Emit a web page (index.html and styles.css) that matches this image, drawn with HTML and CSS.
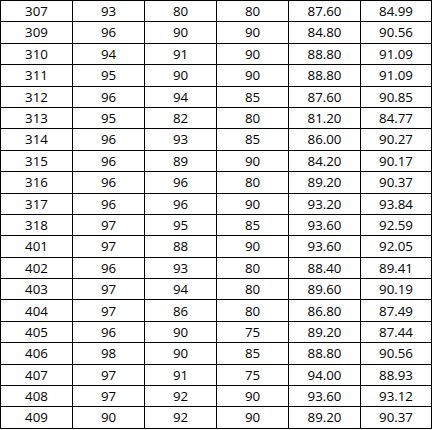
FILE: index.html
```html
<!DOCTYPE html>
<html>
<head>
<meta charset="utf-8">
<link rel="stylesheet" href="styles.css">
</head>
<body>
<div class="sheet">
<div class="c">307</div><div class="c">93</div><div class="c">80</div><div class="c">80</div><div class="c">87.60</div><div class="c">84.99</div>
<div class="c">309</div><div class="c">96</div><div class="c">90</div><div class="c">90</div><div class="c">84.80</div><div class="c">90.56</div>
<div class="c">310</div><div class="c">94</div><div class="c">91</div><div class="c">90</div><div class="c">88.80</div><div class="c">91.09</div>
<div class="c">311</div><div class="c">95</div><div class="c">90</div><div class="c">90</div><div class="c">88.80</div><div class="c">91.09</div>
<div class="c">312</div><div class="c">96</div><div class="c">94</div><div class="c">85</div><div class="c">87.60</div><div class="c">90.85</div>
<div class="c">313</div><div class="c">95</div><div class="c">82</div><div class="c">80</div><div class="c">81.20</div><div class="c">84.77</div>
<div class="c">314</div><div class="c">96</div><div class="c">93</div><div class="c">85</div><div class="c">86.00</div><div class="c">90.27</div>
<div class="c">315</div><div class="c">96</div><div class="c">89</div><div class="c">90</div><div class="c">84.20</div><div class="c">90.17</div>
<div class="c">316</div><div class="c">96</div><div class="c">96</div><div class="c">80</div><div class="c">89.20</div><div class="c">90.37</div>
<div class="c">317</div><div class="c">96</div><div class="c">96</div><div class="c">90</div><div class="c">93.20</div><div class="c">93.84</div>
<div class="c">318</div><div class="c">97</div><div class="c">95</div><div class="c">85</div><div class="c">93.60</div><div class="c">92.59</div>
<div class="c">401</div><div class="c">97</div><div class="c">88</div><div class="c">90</div><div class="c">93.60</div><div class="c">92.05</div>
<div class="c">402</div><div class="c">96</div><div class="c">93</div><div class="c">80</div><div class="c">88.40</div><div class="c">89.41</div>
<div class="c">403</div><div class="c">97</div><div class="c">94</div><div class="c">80</div><div class="c">89.60</div><div class="c">90.19</div>
<div class="c">404</div><div class="c">97</div><div class="c">86</div><div class="c">80</div><div class="c">86.80</div><div class="c">87.49</div>
<div class="c">405</div><div class="c">96</div><div class="c">90</div><div class="c">75</div><div class="c">89.20</div><div class="c">87.44</div>
<div class="c">406</div><div class="c">98</div><div class="c">90</div><div class="c">85</div><div class="c">88.80</div><div class="c">90.56</div>
<div class="c">407</div><div class="c">97</div><div class="c">91</div><div class="c">75</div><div class="c">94.00</div><div class="c">88.93</div>
<div class="c">408</div><div class="c">97</div><div class="c">92</div><div class="c">90</div><div class="c">93.60</div><div class="c">93.12</div>
<div class="c">409</div><div class="c">90</div><div class="c">92</div><div class="c">90</div><div class="c">89.20</div><div class="c">90.37</div>
</div>
</body>
</html>
```

FILE: styles.css
```css
html, body {
  margin: 0;
  padding: 0;
  background: #ffffff;
}
.sheet {
  display: grid;
  grid-template-columns: 71px 71px 71px 71px 71px 70px;
  grid-template-rows: repeat(20, 20.4px);
  gap: 1px;
  width: 430px;
  border: 1px solid #000;
  background: #000;
  font-family: "Open Sans", "Noto Sans", sans-serif;
  font-size: 13.3px;
  color: #000;
}
.c {
  background: #fff;
  display: flex;
  align-items: center;
  justify-content: center;
  line-height: 1;
  padding-top: 1px;
}
```
